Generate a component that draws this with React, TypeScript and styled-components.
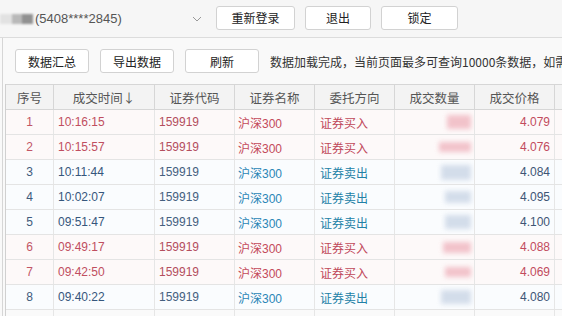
import React from "react";
import styled, { createGlobalStyle } from "styled-components";

const Global = createGlobalStyle`
  html, body { margin: 0; padding: 0; }
  *, *::before, *::after { box-sizing: border-box; }
  body {
    width: 562px; height: 316px; overflow: hidden;
    background: #f9f9f9;
    font-family: "Liberation Sans", "Noto Sans CJK SC", sans-serif;
    font-size: 12px; color: #333;
  }
`;

const TopBar = styled.div`
  height: 38px;
  display: flex;
  align-items: center;
  background: #f6f6f6;
  border-bottom: 1px solid #dcdcdc;
`;

const Masked = styled.div`
  display: flex;
  align-items: center;
  height: 10px;
  filter: blur(0.8px);
`;

const MaskBlock = styled.span<{ $w: number; $c: string }>`
  display: block;
  width: ${(p) => p.$w}px;
  height: 10px;
  background: ${(p) => p.$c};
`;

const Account = styled.span`
  margin-left: 2px;
  color: #555;
  font-size: 13px;
  width: 150px;
`;

const Chevron = styled.svg`
  margin-left: 7px;
  margin-right: 14px;
`;

const Btn = styled.button<{ $w: number }>`
  width: ${(p) => p.$w}px;
  height: 24px;
  padding: 0;
  background: #fff;
  border: 1px solid #d2d2d2;
  border-radius: 3px;
  font-family: "Noto Sans CJK SC", sans-serif;
  font-size: 12px;
  color: #222;
  flex: none;
`;

const TopBtns = styled.div`
  display: flex;
  gap: 10px;
  margin-top: -2px;
`;

const Panel = styled.div`
  margin-left: 2px;
  border-left: 1px solid #d6d6d6;
  height: 278px;
  overflow: hidden;
`;

const Toolbar = styled.div`
  display: flex;
  align-items: center;
  gap: 11px;
  padding: 11px 0 0 12px;
  white-space: nowrap;
  overflow: hidden;
`;

const Status = styled.span`
  font-family: "Noto Sans CJK SC", sans-serif;
  font-size: 12px;
  color: #333;
  flex: none;
`;

const Grid = styled.div`
  margin: 11px 0 0 2px;
  width: 640px;
  border-left: 1px solid #d0d0d0;
`;

const Row = styled.div<{ $bg: string; $line: string }>`
  display: grid;
  grid-template-columns: 48px 101px 80px 80px 80px 80px 80px 91px;
  height: 25px;
  background: ${(p) => p.$bg};
  border-bottom: 1px solid ${(p) => p.$line};
`;

const HeadRow = styled(Row)`
  border-top: 1px solid #d6d6d6;
  height: 26px;
`;

const Th = styled.div`
  display: flex;
  align-items: center;
  justify-content: center;
  border-right: 1px solid #d6d6d6;
  font-family: "Noto Sans CJK SC", sans-serif;
  font-size: 12.5px;
  color: #555;
  white-space: nowrap;
  overflow: hidden;
`;

const Td = styled.div<{ $align?: string; $color?: string; $pl?: number; $pr?: number }>`
  display: flex;
  align-items: center;
  justify-content: ${(p) => p.$align ?? "flex-start"};
  padding: 0 ${(p) => p.$pr ?? 0}px 0 ${(p) => p.$pl ?? 0}px;
  border-right: 1px solid #e6e6e6;
  color: ${(p) => p.$color ?? "#333"};
  font-size: 12px;
  white-space: nowrap;
  overflow: hidden;
`;

const Qty = styled.div<{ $buy: boolean; $w: number; $h: number; $ml: number }>`
  width: ${(p) => p.$w}px;
  height: ${(p) => p.$h}px;
  margin-left: ${(p) => p.$ml}px;
  background: ${(p) => (p.$buy ? "#f0b9c2" : "#cdd8e7")};
  opacity: 0.85;
  filter: blur(2.5px);
`;

const rows = [
  { n: 1, t: "10:16:15", buy: true, p: "4.079", qw: 24, qh: 14, qm: 52 },
  { n: 2, t: "10:15:57", buy: true, p: "4.076", qw: 32, qh: 10, qm: 44 },
  { n: 3, t: "10:11:44", buy: false, p: "4.084", qw: 30, qh: 15, qm: 46 },
  { n: 4, t: "10:02:07", buy: false, p: "4.095", qw: 26, qh: 12, qm: 50 },
  { n: 5, t: "09:51:47", buy: false, p: "4.100", qw: 26, qh: 14, qm: 50 },
  { n: 6, t: "09:49:17", buy: true, p: "4.088", qw: 28, qh: 11, qm: 48 },
  { n: 7, t: "09:42:50", buy: true, p: "4.069", qw: 26, qh: 10, qm: 50 },
  { n: 8, t: "09:40:22", buy: false, p: "4.080", qw: 30, qh: 14, qm: 46 },
];

const red = {
  seq: "#c25666",
  time: "#c04e60",
  code: "#b44e5e",
  name: "#c44a5a",
  dir: "#c0485a",
  price: "#c24b5d",
};
const blue = {
  seq: "#405a7c",
  time: "#36567c",
  code: "#45607f",
  name: "#2a86b6",
  dir: "#2281a6",
  price: "#3e5575",
};

const headers = ["序号", "成交时间↓", "证券代码", "证券名称", "委托方向", "成交数量", "成交价格", ""];

export default function App() {
  return (
    <>
      <Global />
      <TopBar>
        <Masked>
          <MaskBlock $w={12} $c="#e2e2e2" />
          <MaskBlock $w={10} $c="#b9b9b9" />
          <MaskBlock $w={11} $c="#919191" />
        </Masked>
        <Account>(5408****2845)</Account>
        <Chevron width="10" height="6" viewBox="0 0 10 6">
          <path d="M1 1 L5 5 L9 1" fill="none" stroke="#999" strokeWidth="1" />
        </Chevron>
        <TopBtns>
          <Btn $w={79}>重新登录</Btn>
          <Btn $w={66}>退出</Btn>
          <Btn $w={77}>锁定</Btn>
        </TopBtns>
      </TopBar>
      <Panel>
        <Toolbar>
          <Btn $w={74}>数据汇总</Btn>
          <Btn $w={74}>导出数据</Btn>
          <Btn $w={74}>刷新</Btn>
          <Status>数据加载完成，当前页面最多可查询10000条数据，如需</Status>
        </Toolbar>
        <Grid>
          <HeadRow $bg="#f3f3f3" $line="#d6d6d6">
            {headers.map((h, i) => (
              <Th key={i}>{h}</Th>
            ))}
          </HeadRow>
          {rows.map((r) => {
            const c = r.buy ? red : blue;
            return (
              <Row key={r.n} $bg={r.buy ? "#fdf9f9" : "#fafcfe"} $line="#e4e4e4">
                <Td $align="center" $color={c.seq}>{r.n}</Td>
                <Td $color={c.time} $pl={4}>{r.t}</Td>
                <Td $color={c.code} $pl={4}>159919</Td>
                <Td $color={c.name} $pl={3}>沪深300</Td>
                <Td $color={c.dir} $pl={5}>{r.buy ? "证券买入" : "证券卖出"}</Td>
                <Td>
                  <Qty $buy={r.buy} $w={r.qw} $h={r.qh} $ml={r.qm} />
                </Td>
                <Td $align="flex-end" $color={c.price} $pr={4}>{r.p}</Td>
                <Td />
              </Row>
            );
          })}
          <Row $bg="#fafafa" $line="#e4e4e4">
            {headers.map((_, i) => (
              <Td key={i} />
            ))}
          </Row>
        </Grid>
      </Panel>
    </>
  );
}
